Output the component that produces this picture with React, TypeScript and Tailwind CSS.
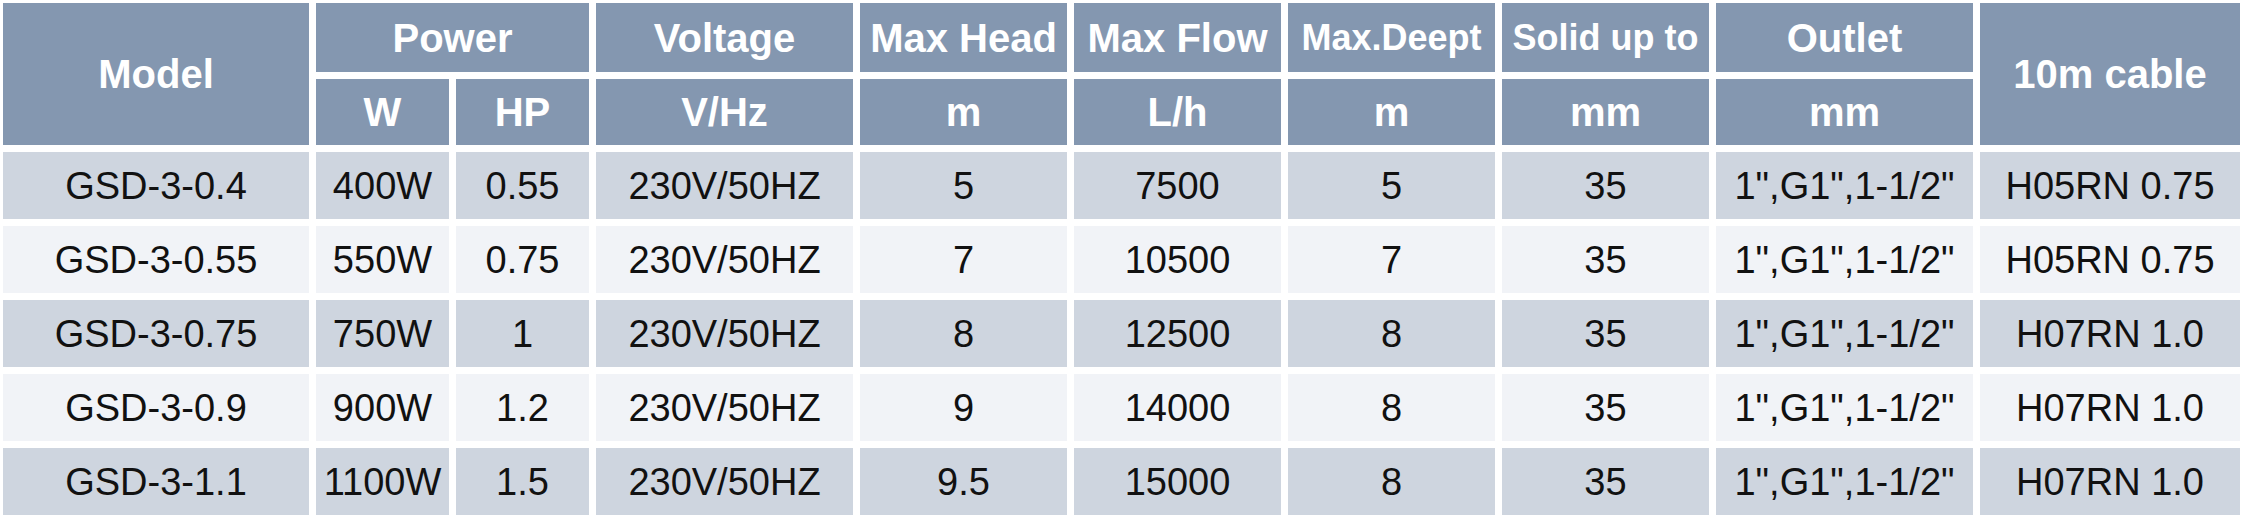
import React from "react";

const rows = [
  ["GSD-3-0.4", "400W", "0.55", "230V/50HZ", "5", "7500", "5", "35", "1\",G1\",1-1/2\"", "H05RN 0.75"],
  ["GSD-3-0.55", "550W", "0.75", "230V/50HZ", "7", "10500", "7", "35", "1\",G1\",1-1/2\"", "H05RN 0.75"],
  ["GSD-3-0.75", "750W", "1", "230V/50HZ", "8", "12500", "8", "35", "1\",G1\",1-1/2\"", "H07RN 1.0"],
  ["GSD-3-0.9", "900W", "1.2", "230V/50HZ", "9", "14000", "8", "35", "1\",G1\",1-1/2\"", "H07RN 1.0"],
  ["GSD-3-1.1", "1100W", "1.5", "230V/50HZ", "9.5", "15000", "8", "35", "1\",G1\",1-1/2\"", "H07RN 1.0"],
];

const H = "bg-[#8497b0] text-white font-bold flex items-center justify-center whitespace-nowrap leading-none";

export default function App() {
  return (
    <div className="w-[2244px] h-[525px] bg-white p-[3px]" style={{ fontFamily: '"Liberation Sans", Arial, sans-serif' }}>
      <div className="grid grid-cols-[306px_133px_133px_257px_207px_207px_207px_207px_257px_260px] grid-rows-[69px_66px_67px_67px_67px_67px_67px] gap-[7px]">
        <div className={`${H} row-span-2 text-[40px]`}>Model</div>
        <div className={`${H} col-span-2 text-[40px]`}>Power</div>
        <div className={`${H} text-[40px]`}>Voltage</div>
        <div className={`${H} text-[40px]`}>Max Head</div>
        <div className={`${H} text-[40px]`}>Max Flow</div>
        <div className={`${H} text-[36px]`}>Max.Deept</div>
        <div className={`${H} text-[36px]`}>Solid up to</div>
        <div className={`${H} text-[40px]`}>Outlet</div>
        <div className={`${H} row-span-2 text-[40px]`}>10m cable</div>
        {["W", "HP", "V/Hz", "m", "L/h", "m", "mm", "mm"].map((u, i) => (
          <div key={i} className={`${H} text-[40px]`}>{u}</div>
        ))}
        {rows.map((r, ri) =>
          r.map((c, ci) => (
            <div
              key={`${ri}-${ci}`}
              className={`${ri % 2 === 0 ? "bg-[#ced5df]" : "bg-[#f1f3f7]"} text-[#111111] text-[38px] flex items-center justify-center whitespace-nowrap leading-none`}
            >
              {c}
            </div>
          ))
        )}
      </div>
    </div>
  );
}
